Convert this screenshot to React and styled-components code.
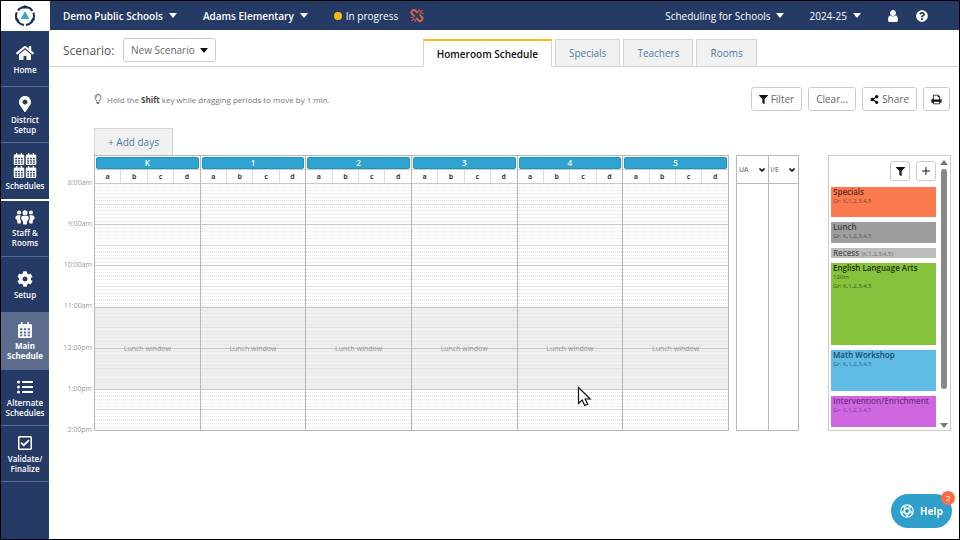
import React from 'react';
import styled, { createGlobalStyle, css } from 'styled-components';
import {
  FaHome,
  FaMapMarkerAlt,
  FaCog,
  FaListUl,
  FaFilter,
  FaShareAlt,
  FaRegLightbulb,
  FaQuestionCircle,
  FaRegCheckSquare
} from 'react-icons/fa';
import { ChevronDown, Plus } from 'lucide-react';

const GlobalStyle = createGlobalStyle`
  *, *::before, *::after {
    box-sizing: border-box;
  }

  body {
    margin: 0;
    font-family: 'Open Sans', 'Noto Sans', sans-serif;
    font-size: 11px;
    color: #555;
    background-color: #fff;
  }

  button, select {
    font-family: inherit;
    margin: 0;
  }

  svg {
    display: block;
    flex-shrink: 0;
  }
`;

const Page = styled.div`
  display: flex;
  min-height: 100vh;
  border: 1px solid #000;
`;

const Sidebar = styled.nav`
  width: 48px;
  flex-shrink: 0;
  background-color: #263a66;
`;

const LogoLink = styled.a`
  display: flex;
  justify-content: center;
  align-items: center;
  height: 30px;
  background-color: #fff;
`;

const SideLink = styled.a`
  display: flex;
  flex-direction: column;
  justify-content: center;
  align-items: center;
  gap: 3px;
  height: 56px;
  padding-top: 1px;
  border-bottom: 1px solid #5a6b92;
  color: #fff;
  font-size: 8px;
  font-weight: 600;
  line-height: 10px;
  text-align: center;
  text-decoration: none;

  ${({ $divider }) =>
    $divider &&
    css`
      height: 58px;
      border-bottom: 2px solid #fff;
    `}

  ${({ $active }) =>
    $active &&
    css`
      height: 57px;
      background-color: #5d6c8d;
      font-weight: 700;
    `}
`;

const CalendarGroup = styled.span`
  display: grid;
  grid-template-columns: 12px 12px;
  gap: 1px 0;
`;

const Content = styled.div`
  flex: 1;
  min-width: 0;
  margin-left: 1px;
`;

const TopBar = styled.header`
  display: flex;
  align-items: center;
  justify-content: space-between;
  height: 29px;
  padding: 0 31px 0 13px;
  background-color: #263a66;
  color: #fff;
`;

const TopGroup = styled.div`
  display: flex;
  align-items: center;
  gap: ${({ $gap }) => $gap}px;
`;

const TopButton = styled.button`
  display: flex;
  align-items: center;
  gap: 6px;
  padding: 0;
  border: 0;
  background: none;
  color: #fff;
  font-size: 10px;
  font-weight: ${({ $bold }) => ($bold ? 600 : 500)};
  line-height: 16px;
  white-space: nowrap;
`;

const Status = styled.span`
  display: flex;
  align-items: center;
  gap: 4px;
  font-size: 10px;
  font-weight: 500;

  &::before {
    content: '';
    width: 8px;
    height: 8px;
    border-radius: 50%;
    background-color: #fdb913;
  }
`;

const SubHeader = styled.div`
  display: flex;
  align-items: center;
  height: 37px;
  padding: 4px 0 0 13px;
  border-bottom: 1px solid #d4d4d4;
`;

const ScenarioLabel = styled.span`
  width: 60px;
  font-size: 12px;
`;

const OutlineButton = styled.button`
  display: flex;
  justify-content: center;
  align-items: center;
  gap: 3px;
  height: 24px;
  padding: 0 7px;
  border: 1px solid #ccc;
  border-radius: 3px;
  background-color: #fff;
  color: #666;
  font-size: 10px;
  white-space: nowrap;

  svg {
    color: #111;
  }
`;

const ScenarioButton = styled(OutlineButton)`
  gap: 5px;
`;

const SquareButton = styled(OutlineButton)`
  width: 20px;
  height: 20px;
  padding: 0;
`;

const Tabs = styled.div`
  display: flex;
  align-self: flex-end;
  gap: 3px;
  margin: 0 auto -1px 207px;
`;

const Tab = styled.button`
  height: 28px;
  padding: 0 13px;
  border: 1px solid #d4d4d4;
  background-color: #f1f1f1;
  color: #4c7ca6;
  font-size: 10px;
  white-space: nowrap;

  ${({ $active }) =>
    $active &&
    css`
      border-top: 2px solid #fdb913;
      border-bottom-color: #fff;
      background-color: #fff;
      color: #111;
      font-weight: 600;
    `}
`;

const Toolbar = styled.div`
  display: flex;
  align-items: center;
  justify-content: space-between;
  padding: 20px 9px 0 43px;
`;

const Hint = styled.p`
  display: flex;
  align-items: center;
  gap: 4px;
  margin: 0;
  font-size: 8px;
  color: #777;

  b {
    color: #444;
  }
`;

const ToolbarButtons = styled.div`
  display: flex;
  gap: 6px;
`;

const AddDays = styled(Tab)`
  display: block;
  height: 27px;
  margin: 17px 0 0 44px;
  border-bottom: 0;
`;

const Board = styled.main`
  display: flex;
  align-items: stretch;
  padding-right: 8px;
`;

/* the last label is centred on the bottom line, so the column hangs below it */
const Times = styled.div`
  display: flex;
  flex-direction: column;
  justify-content: space-between;
  width: 44px;
  flex-shrink: 0;
  margin-bottom: -7px;
  padding: 21px 2px 1px 0;
  font-size: 7px;
  line-height: 14px;
  color: #999;
  text-align: right;
`;

const Calendar = styled.table`
  flex: 1;
  width: 100%;
  table-layout: fixed;
  border-collapse: separate;
  border-spacing: 0;
  border: 1px solid #b8b8b8;
  border-left: 0;

  th,
  td {
    padding: 0;
  }
`;

const GradeCell = styled.th`
  height: 14px;
  border-left: 1px solid #b8b8b8;
  border-bottom: 1px solid #ccc;
`;

const GradeName = styled.span`
  display: block;
  height: 12px;
  margin: 0 1px;
  border: 1px solid #1c92c0;
  border-radius: 2px;
  background-color: #2fa4d3;
  color: #fff;
  font-size: 8px;
  font-weight: 600;
  line-height: 10px;
`;

const SectionCell = styled.th`
  height: 13px;
  border-left: 1px solid ${({ $first }) => ($first ? '#b8b8b8' : '#ddd')};
  color: #444;
  font-size: 7px;
  font-weight: 700;
  line-height: 12px;
`;

const HourCell = styled.td`
  position: relative;
  border-left: 1px solid #b8b8b8;
  background-color: ${({ $lunch }) => ($lunch ? '#efefef' : '#fff')};
`;

const Hour = styled.div`
  display: flex;
  flex-direction: column;
  height: 41px;
`;

const Slot = styled.div`
  flex: 1;
  border-top: 1px dotted #e2e2e2;

  &:nth-child(7) {
    border-top: 1px solid #e0e0e0;
  }

  &:first-child {
    border-top: 1px solid #c8c8c8;
  }
`;

const LunchLabel = styled.span`
  position: absolute;
  top: -6px;
  left: 0;
  right: 0;
  color: #999;
  font-size: 7px;
  line-height: 14px;
  text-align: center;
`;

const SideColumns = styled.div`
  display: grid;
  grid-template-columns: 1fr 1fr;
  width: 63px;
  flex-shrink: 0;
  margin-left: 7px;
  border: 1px solid #b8b8b8;
`;

const SideColumn = styled.div`
  & + & {
    border-left: 1px solid #b8b8b8;
  }
`;

const SelectBox = styled.div`
  position: relative;
  height: 28px;
  border-bottom: 1px solid #b8b8b8;

  svg {
    position: absolute;
    top: 10px;
    right: 2px;
    color: #000;
    pointer-events: none;
  }
`;

const Select = styled.select`
  width: 100%;
  height: 100%;
  padding: 0 2px;
  border: 0;
  appearance: none;
  background: none;
  color: #555;
  font-size: 7px;
`;

const Palette = styled.aside`
  display: flex;
  width: 123px;
  flex-shrink: 0;
  margin-left: 29px;
  border: 1px solid #ccc;
`;

const PaletteBody = styled.div`
  flex: 1;
  min-width: 0;
  padding: 5px 2px 3px;
`;

const PaletteActions = styled.div`
  display: flex;
  justify-content: flex-end;
  gap: 6px;
  margin-bottom: 6px;
`;

const ChipList = styled.ul`
  display: flex;
  flex-direction: column;
  gap: 5px;
  margin: 0;
  padding: 0;
  list-style: none;
`;

const Chip = styled.li`
  height: ${({ $height }) => $height}px;
  padding: 0 2px;
  background-color: ${({ $color }) => $color};
  color: ${({ $text }) => $text};
  font-size: 8px;
  font-weight: 600;
  line-height: 10px;
  white-space: nowrap;
`;

const ChipDetail = styled.small`
  display: ${({ $inline }) => ($inline ? 'inline' : 'block')};
  font-size: 6px;
  font-weight: 400;
  line-height: 9px;
  opacity: 0.75;
`;

const ScrollTrack = styled.div`
  display: flex;
  flex-direction: column;
  align-items: center;
  justify-content: space-between;
  gap: 4px;
  width: 12px;
  padding: 4px 0 2px;
  color: #777;
`;

const ScrollThumb = styled.div`
  flex: 1;
  width: 6px;
  margin-bottom: 30px;
  border-radius: 3px;
  background-color: #888;
`;

const HelpButton = styled.button`
  position: fixed;
  right: 8px;
  bottom: 12px;
  display: flex;
  align-items: center;
  justify-content: center;
  gap: 6px;
  width: 61px;
  height: 34px;
  padding: 0;
  border: 0;
  border-radius: 17px;
  background-color: #2fa0cb;
  color: #fff;
  font-size: 10px;
  font-weight: 700;
`;

const HelpBadge = styled.span`
  position: absolute;
  top: -3px;
  right: -3px;
  width: 14px;
  height: 14px;
  border-radius: 50%;
  background-color: #ff6b45;
  font-size: 8px;
  font-weight: 400;
  line-height: 14px;
`;

const Pointer = styled.svg`
  position: fixed;
  top: 386px;
  left: 577px;
`;

const Caret = ({ up }) => (
  <svg width="8" height="5" viewBox="0 0 8 5" fill="currentColor">
    <path d={up ? 'M0 5h8L4 0z' : 'M0 0h8L4 5z'} />
  </svg>
);

const Logo = () => (
  <svg width="22" height="22" viewBox="0 0 22 22">
    <circle
      cx="11"
      cy="11"
      r="9"
      fill="none"
      stroke="#1d2f57"
      strokeWidth="2"
      strokeDasharray="7.4 2.02"
      strokeDashoffset="3.7"
    />
    <path d="M9 1.5 11 0l2 1.5v2H9zM1 14l2.5-1 2 3-2 1.5zM21 14l-2.5-1-2 3 2 1.5z" fill="#1d2f57" />
    <path d="M11 7 14.5 13.5h-7z" fill="#2fa4d3" stroke="#2fa4d3" strokeLinejoin="round" />
  </svg>
);

const CalendarIcon = ({ size }) => (
  <svg width={size} height={size} viewBox="0 0 16 16" fill="currentColor" fillRule="evenodd">
    <path d="M4 0h1.6v2h4.8V0H12v2h1.5q1.5 0 1.5 1.5v11q0 1.5-1.5 1.5h-11Q1 16 1 14.5v-11Q1 2 2.5 2H4zM3 6.3v2h2.3v-2zm3.8 0v2h2.4v-2zm3.9 0v2H13v-2zM3 9.5v2h2.3v-2zm3.8 0v2h2.4v-2zm3.9 0v2H13v-2zM3 12.6v1.7h2.3v-1.7zm3.8 0v1.7h2.4v-1.7zm3.9 0v1.7H13v-1.7z" />
  </svg>
);

const StaffIcon = () => (
  <svg width="20" height="15" viewBox="0 0 20 15" fill="currentColor">
    <circle cx="4" cy="2.5" r="2.1" />
    <circle cx="16" cy="2.5" r="2.1" />
    <circle cx="10" cy="2.7" r="2.5" />
    <path d="M3 5.3h2.6Q5 7 5.2 9.5l1 1.5-.7 2.5h-3L2 10 .5 9q-.6-3.7 2.5-3.7zM17 5.3h-2.6Q15 7 14.8 9.5l-1 1.5.7 2.5h3L18 10l1.5-1q.6-3.7-2.5-3.7z" />
    <path d="M8.5 5.8h3q2.5 0 2.3 3.2l-1.4 1.6-.7 3.9H8.3l-.7-3.9L6.2 9q-.2-3.2 2.3-3.2z" />
  </svg>
);

const UserIcon = () => (
  <svg width="14" height="14" viewBox="0 0 1792 1792" fill="currentColor">
    <path d="M1536 1399q0 109-62.5 187t-150.5 78h-854q-88 0-150.5-78t-62.5-187q0-85 8.5-160.5t31.5-152 58.5-131 94-89 134.5-34.5q131 128 313 128t313-128q76 0 134.5 34.5t94 89 58.5 131 31.5 152 8.5 160.5zm-256-887q0 159-112.5 271.5t-271.5 112.5-271.5-112.5-112.5-271.5 112.5-271.5 271.5-112.5 271.5 112.5 112.5 271.5z" />
  </svg>
);

const BrokenLinkIcon = () => (
  <svg width="14" height="14" viewBox="0 0 1792 1792" fill="#f0693c" stroke="#f0693c" strokeWidth="50">
    <path d="M503 1271l-256 256q-10 9-23 9-12 0-23-9-9-10-9-23t9-23l256-256q10-9 23-9t23 9q9 10 9 23t-9 23zm169 41v320q0 14-9 23t-23 9-23-9-9-23v-320q0-14 9-23t23-9 23 9 9 23zm-224-224q0 14-9 23t-23 9h-320q-14 0-23-9t-9-23 9-23 23-9h320q14 0 23 9t9 23zm1264 128q0 120-85 203l-147 146q-83 83-203 83-121 0-204-85l-334-335q-21-21-42-56l239-18 273 274q27 27 68 27.5t68-26.5l147-146q28-28 28-67 0-40-28-68l-274-275 18-239q35 21 56 42l336 336q84 86 84 204zm-617-724l-239 18-273-274q-28-28-68-28-39 0-68 27l-147 146q-28 28-28 67 0 40 28 68l274 274-18 240q-35-21-56-42l-336-336q-84-86-84-204 0-120 85-203l147-146q83-83 203-83 121 0 204 85l334 335q21 21 42 56zm633 84q0 14-9 23t-23 9h-320q-14 0-23-9t-9-23 9-23 23-9h320q14 0 23 9t9 23zm-544-544v320q0 14-9 23t-23 9-23-9-9-23v-320q0-14 9-23t23-9 23 9 9 23zm407 151l-256 256q-11 9-23 9t-23-9q-9-10-9-23t9-23l256-256q10-9 23-9t23 9q9 10 9 23t-9 23z" />
  </svg>
);

const PrintIcon = () => (
  <svg width="11" height="11" viewBox="0 0 1792 1792" fill="currentColor">
    <path d="M448 1536h896v-256h-896v256zm0-640h896v-384h-160q-40 0-68-28t-28-68v-160h-640v640zm1152 64q0-26-19-45t-45-19-45 19-19 45 19 45 45 19 45-19 19-45zm128 0v416q0 13-9.5 22.5t-22.5 9.5h-224v160q0 40-28 68t-68 28h-960q-40 0-68-28t-28-68v-160h-224q-13 0-22.5-9.5t-9.5-22.5v-416q0-79 56.5-135.5t135.5-56.5h64v-544q0-40 28-68t68-28h672q40 0 88 20t76 48l152 152q28 28 48 76t20 88v256h64q79 0 135.5 56.5t56.5 135.5z" />
  </svg>
);

const HelpIcon = () => (
  <svg width="14" height="14" viewBox="0 0 14 14" fill="none" stroke="currentColor">
    <circle cx="7" cy="7" r="6.2" strokeWidth="1.2" />
    <circle cx="7" cy="7" r="2.6" strokeWidth="1.2" />
    <path
      d="M7 4.400 4 1.600M7 4.400l3.400-2.600M9.500 6.300l1-4.300M9.500 6.300l3.500 2.200M8.500 9.200l4.400-.5M8.500 9.200 7 13M5.500 9.200 7 13M5.500 9.200 1.200 8.600M4.500 6.300 1.200 8.600M4.500 6.300 4 1.600"
      strokeWidth="1"
    />
  </svg>
);

const sideLinks = [
  { icon: <FaHome size={18} />, lines: ['Home'] },
  { icon: <FaMapMarkerAlt size={16} />, lines: ['District', 'Setup'] },
  {
    icon: (
      <CalendarGroup>
        <CalendarIcon size={12} />
        <CalendarIcon size={12} />
        <CalendarIcon size={12} />
        <CalendarIcon size={12} />
      </CalendarGroup>
    ),
    lines: ['Schedules'],
    divider: true
  },
  { icon: <StaffIcon />, lines: ['Staff &', 'Rooms'] },
  { icon: <FaCog size={16} />, lines: ['Setup'] },
  { icon: <CalendarIcon size={16} />, lines: ['Main', 'Schedule'], active: true },
  { icon: <FaListUl size={16} />, lines: ['Alternate', 'Schedules'] },
  { icon: <FaRegCheckSquare size={16} />, lines: ['Validate/', 'Finalize'] }
];

const tabs = ['Homeroom Schedule', 'Specials', 'Teachers', 'Rooms'];
const grades = ['K', '1', '2', '3', '4', '5'];
const sections = ['a', 'b', 'c', 'd'];
const times = ['8:00am', '9:00am', '10:00am', '11:00am', '12:00pm', '1:00pm', '2:00pm'];
const lunchTimes = ['11:00am', '12:00pm'];
const slots = Array.from({ length: 12 }, (_, i) => i);

const chips = [
  { name: 'Specials', color: '#fc7a50', text: '#5c2a22', height: 30 },
  { name: 'Lunch', color: '#9e9e9e', text: '#404040', height: 21 },
  { name: 'Recess', color: '#bcbcbc', text: '#555', height: 10, inline: true },
  { name: 'English Language Arts', color: '#87c23d', text: '#20350c', height: 82, length: '120m' },
  { name: 'Math Workshop', color: '#60bce4', text: '#17486a', height: 41 },
  { name: 'Intervention/Enrichment', color: '#cf67e0', text: '#74308a', height: 31 }
];

const GradeCalendar = () => (
  <Calendar>
    <thead>
      <tr>
        {grades.map(grade => (
          <GradeCell key={grade} colSpan={4}>
            <GradeName>{grade}</GradeName>
          </GradeCell>
        ))}
      </tr>
      <tr>
        {grades.map(grade =>
          sections.map((section, i) => (
            <SectionCell key={grade + section} $first={i === 0}>
              {section}
            </SectionCell>
          ))
        )}
      </tr>
    </thead>
    <tbody>
      {times.slice(0, -1).map(time => (
        <tr key={time}>
          {grades.map(grade => (
            <HourCell key={grade} colSpan={4} $lunch={lunchTimes.includes(time)}>
              <Hour>
                {slots.map(slot => (
                  <Slot key={slot} />
                ))}
              </Hour>
              {time === '12:00pm' && <LunchLabel>Lunch window</LunchLabel>}
            </HourCell>
          ))}
        </tr>
      ))}
    </tbody>
  </Calendar>
);

const App = () => {
  return (
    <>
      <GlobalStyle />
      <Page>
        <Sidebar>
          <LogoLink href="#" aria-label="Dashboard">
            <Logo />
          </LogoLink>
          {sideLinks.map(({ icon, lines, divider, active }) => (
            <SideLink key={lines.join(' ')} href="#" $divider={divider} $active={active}>
              {icon}
              <span>
                {lines[0]}
                {lines[1] && <br />}
                {lines[1]}
              </span>
            </SideLink>
          ))}
        </Sidebar>
        <Content>
          <TopBar>
            <TopGroup $gap={26}>
              <TopButton $bold>
                Demo Public Schools
                <Caret />
              </TopButton>
              <TopButton $bold>
                Adams Elementary
                <Caret />
              </TopButton>
              <TopGroup $gap={12}>
                <Status>In progress</Status>
                <BrokenLinkIcon />
              </TopGroup>
            </TopGroup>
            <TopGroup $gap={25}>
              <TopButton>
                Scheduling for Schools
                <Caret />
              </TopButton>
              <TopButton>
                2024-25
                <Caret />
              </TopButton>
              <TopGroup $gap={16}>
                <TopButton aria-label="Account">
                  <UserIcon />
                </TopButton>
                <TopButton aria-label="Support">
                  <FaQuestionCircle size={12} />
                </TopButton>
              </TopGroup>
            </TopGroup>
          </TopBar>
          <SubHeader>
            <ScenarioLabel>Scenario:</ScenarioLabel>
            <ScenarioButton>
              New Scenario
              <Caret />
            </ScenarioButton>
            <Tabs>
              {tabs.map((tab, i) => (
                <Tab key={tab} $active={i === 0}>
                  {tab}
                </Tab>
              ))}
            </Tabs>
          </SubHeader>
          <Toolbar>
            <Hint>
              <FaRegLightbulb size={10} />
              <span>
                Hold the <b>Shift</b> key while dragging periods to move by 1 min.
              </span>
            </Hint>
            <ToolbarButtons>
              <OutlineButton>
                <FaFilter size={9} />
                Filter
              </OutlineButton>
              <OutlineButton>Clear...</OutlineButton>
              <OutlineButton>
                <FaShareAlt size={9} />
                Share
              </OutlineButton>
              <OutlineButton aria-label="Print">
                <PrintIcon />
              </OutlineButton>
            </ToolbarButtons>
          </Toolbar>
          <AddDays>+ Add days</AddDays>
          <Board>
            <Times>
              {times.map(time => (
                <span key={time}>{time}</span>
              ))}
            </Times>
            <GradeCalendar />
            <SideColumns>
              {['UA', 'I/E'].map(name => (
                <SideColumn key={name}>
                  <SelectBox>
                    <Select aria-label={name}>
                      <option>{name}</option>
                    </Select>
                    <ChevronDown size={8} strokeWidth={5} />
                  </SelectBox>
                </SideColumn>
              ))}
            </SideColumns>
            <Palette>
              <PaletteBody>
                <PaletteActions>
                  <SquareButton aria-label="Filter periods">
                    <FaFilter size={9} />
                  </SquareButton>
                  <SquareButton aria-label="Add period">
                    <Plus size={12} />
                  </SquareButton>
                </PaletteActions>
                <ChipList>
                  {chips.map(({ name, color, text, height, length, inline }) => (
                    <Chip key={name} $color={color} $text={text} $height={height}>
                      {name}
                      {inline && ' '}
                      {length && <ChipDetail>{length}</ChipDetail>}
                      <ChipDetail $inline={inline}>
                        {inline ? '(K,1,2,3,4,5)' : 'Gr: K,1,2,3,4,5'}
                      </ChipDetail>
                    </Chip>
                  ))}
                </ChipList>
              </PaletteBody>
              <ScrollTrack>
                <Caret up />
                <ScrollThumb />
                <Caret />
              </ScrollTrack>
            </Palette>
          </Board>
        </Content>
      </Page>
      <HelpButton>
        <HelpIcon />
        Help
        <HelpBadge>2</HelpBadge>
      </HelpButton>
      <Pointer width="15" height="21" viewBox="0 0 15 21">
        <path
          d="M1.5 1.5v16l3.7-3.4 2.5 5.4 3-1.3-2.5-5.2h5z"
          fill="#fff"
          stroke="#111"
          strokeWidth="1.2"
        />
      </Pointer>
    </>
  );
};

export default App;
